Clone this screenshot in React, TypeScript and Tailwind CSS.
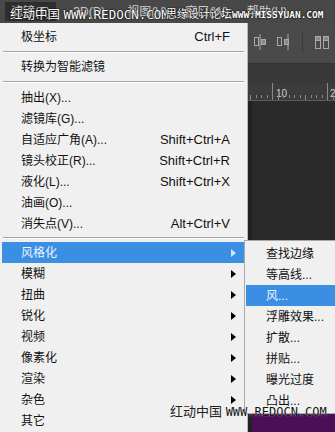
import React from 'react';

const FONT = { fontFamily: '"Liberation Sans", "Noto Sans CJK SC", sans-serif' };
const MONO = { fontFamily: '"DejaVu Sans Mono", monospace' };

type Item = { label: string; shortcut?: string; sub?: boolean; active?: boolean };

const topItems: Item[] = [
  { label: '抽出(X)...' },
  { label: '滤镜库(G)...' },
  { label: '自适应广角(A)...', shortcut: 'Shift+Ctrl+A' },
  { label: '镜头校正(R)...', shortcut: 'Shift+Ctrl+R' },
  { label: '液化(L)...', shortcut: 'Shift+Ctrl+X' },
  { label: '油画(O)...' },
  { label: '消失点(V)...', shortcut: 'Alt+Ctrl+V' },
];

const groups: Item[] = [
  { label: '风格化', sub: true, active: true },
  { label: '模糊', sub: true },
  { label: '扭曲', sub: true },
  { label: '锐化', sub: true },
  { label: '视频', sub: true },
  { label: '像素化', sub: true },
  { label: '渲染', sub: true },
  { label: '杂色', sub: true },
  { label: '其它' },
];

const subItems = ['查找边缘', '等高线...', '风...', '浮雕效果...', '扩散...', '拼贴...', '曝光过度', '凸出...'];

function Arrow({ white }: { white?: boolean }) {
  return (
    <svg width="5" height="8" viewBox="0 0 5 8" className="shrink-0">
      <path d="M0 0 L5 4 L0 8 Z" fill={white ? '#cfe6ff' : '#000'} />
    </svg>
  );
}

function Row({ item }: { item: Item }) {
  return (
    <div
      className={`h-[21px] flex items-center pl-[19px] pr-[9px] mx-[2px] ${
        item.active ? 'bg-[#3b8fe3] text-[#eaf4ff]' : 'text-[#111]'
      }`}
    >
      <span className="flex-1 text-[12px] leading-none">{item.label}</span>
      {item.shortcut && <span className="text-[13px] leading-none pr-[6px]">{item.shortcut}</span>}
      {item.sub && <Arrow white={item.active} />}
    </div>
  );
}

function Sep({ h }: { h: string }) {
  return (
    <div className={`${h} flex flex-col justify-center px-[3px]`}>
      <div className="h-px bg-[#a5a5a5]" />
      <div className="h-px bg-white" />
    </div>
  );
}

function AlignIcon({ variant }: { variant: number }) {
  if (variant === 2) {
    return (
      <svg width="16" height="16" viewBox="0 0 16 16" fill="none" stroke="#a9a9a9" strokeWidth="1">
        <rect x="1.5" y="2.5" width="5" height="4" fill="#8a8a8a" />
        <rect x="9.5" y="2.5" width="5" height="4" fill="#8a8a8a" />
        <rect x="1.5" y="6.5" width="5" height="8" />
        <rect x="9.5" y="6.5" width="5" height="8" />
      </svg>
    );
  }
  return (
    <svg width="14" height="16" viewBox="0 0 14 16" fill="none" stroke="#a9a9a9" strokeWidth="1">
      <line x1={variant === 0 ? 7 : 12} y1="0" x2={variant === 0 ? 7 : 12} y2="16" />
      <rect x="1.5" y="3.5" width="4" height="8" />
      <rect x="8.5" y="5.5" width="4" height="5" fill="#8a8a8a" />
    </svg>
  );
}

function Ruler() {
  const ticks = Array.from({ length: 16 }, (_, i) => i);
  return (
    <div className="h-[18px] bg-[#3c3c3c] border-b border-[#5a5a5a] relative overflow-hidden">
      <div className="absolute left-[24px] top-0 h-full w-px bg-[#8a8a8a]" />
      <span className="absolute left-[28px] top-[3px] text-[10px] text-[#cfcfcf]" style={FONT}>10</span>
      <div className="absolute left-[79px] top-0 h-full w-px bg-[#8a8a8a]" />
      <span className="absolute left-[82px] top-[3px] text-[10px] text-[#cfcfcf]" style={FONT}>2</span>
      <div className="absolute bottom-0 left-0 flex gap-[4.5px] pl-[2px]">
        {ticks.map((t) => (
          <div key={t} className={`w-px bg-[#8a8a8a] ${t % 5 === 0 ? 'h-[5px]' : 'h-[3px]'}`} />
        ))}
      </div>
    </div>
  );
}

export default function App() {
  return (
    <div className="relative w-[335px] h-[432px] overflow-hidden bg-[#282828]" style={FONT}>
      {/* app menu bar */}
      <div className="h-[23px] bg-[#484848] flex items-center text-[12px] text-[#cdcdcd] pl-[5px]">
        <div className="h-[19px] px-[6px] flex items-center bg-[#2e2e2e]">滤镜(T)</div>
        <div className="ml-[17px]">3D(D)</div>
        <div className="ml-[22px]">视图(V)</div>
        <div className="ml-[18px]">窗口(W)</div>
        <div className="ml-[18px]">帮助(H)</div>
      </div>

      <div className="flex h-[409px]">
        {/* filter menu */}
        <div className="w-[248px] bg-[#f0f0f0] border-r border-[#b9b9b9] pt-[3px] flex flex-col">
          <Row item={{ label: '极坐标', shortcut: 'Ctrl+F' }} />
          <Sep h="h-[9px]" />
          <Row item={{ label: '转换为智能滤镜' }} />
          <Sep h="h-[10px]" />
          {topItems.map((it) => (
            <Row key={it.label} item={it} />
          ))}
          <Sep h="h-[8px]" />
          {groups.map((it) => (
            <Row key={it.label} item={it} />
          ))}
        </div>

        {/* workspace */}
        <div className="flex-1 flex flex-col">
          <div className="h-[40px] bg-[#4a4a4a] flex items-center pl-[5px] pb-[3px]">
            <AlignIcon variant={0} />
            <div className="ml-[9px]">
              <AlignIcon variant={1} />
            </div>
            <div className="ml-[12px] w-px h-[22px] bg-[#3a3a3a]" />
            <div className="ml-[11px]">
              <AlignIcon variant={2} />
            </div>
          </div>
          <div className="h-[20px] bg-[#393939] border-t border-[#333]" />
          <Ruler />
          <div className="flex-1 flex">
            <div className="w-[4px] bg-[#222]" />
            <div className="flex-1 flex flex-col">
              <div className="flex-1 bg-[#2a2a2a]" />
              <div className="h-[20px] bg-[#4b0e58]" />
            </div>
          </div>
        </div>
      </div>

      {/* filter submenu */}
      <div className="absolute left-[244px] top-[240px] w-[95px] bg-[#f0f0f0] border border-[#a8a8a8] pt-[2px] pb-[2px]">
        {subItems.map((s) => (
          <div
            key={s}
            className={`h-[21px] flex items-center pl-[20px] ml-[1px] text-[12px] ${
              s === '风...' ? 'bg-[#3b8fe3] text-[#eaf4ff]' : 'text-[#111]'
            }`}
          >
            {s}
          </div>
        ))}
      </div>

      {/* watermarks */}
      <div className="absolute left-[10px] top-[9px] text-[12.5px] leading-none text-white [text-shadow:0_0_2px_#000,0_0_1px_#000] whitespace-nowrap">
        红动中国 <span className="text-[12.5px]" style={MONO}>WWW.REDOCN.COM</span>
      </div>
      <div className="absolute left-[166px] top-[9px] text-[11px] leading-none text-white [text-shadow:0_0_2px_#000,0_0_1px_#000] whitespace-nowrap">
        思缘设计论坛<span className="text-[9.5px] font-bold" style={MONO}>WWW.MISSYUAN.COM</span>
      </div>
      <div className="absolute left-[170px] top-[405px] text-[13px] leading-none text-[#222] whitespace-nowrap">
        红动中国 <span className="text-[12px] text-[#111] [text-shadow:0_0_1px_#fff]" style={MONO}>WWW.REDOCN.COM</span>
      </div>
    </div>
  );
}
